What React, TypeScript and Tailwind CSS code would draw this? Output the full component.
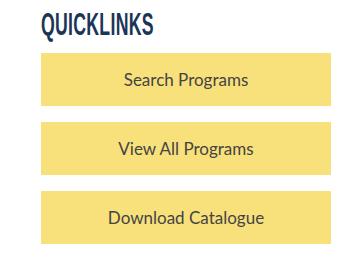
export default function App() {
  const links = ["Search Programs", "View All Programs", "Download Catalogue"];

  return (
    <div className="min-h-[271px] w-[363px] bg-white pl-[41px] pr-[32px] pt-[9px]">
      <h2 className="origin-left scale-x-[0.57] whitespace-nowrap font-['Liberation_Sans_Narrow','Liberation_Sans',sans-serif] text-[31px] font-bold leading-[32px] tracking-[0.5px] text-[#1b3556]">
        QUICKLINKS
      </h2>
      <div className="mt-[12px] flex flex-col gap-[16px]">
        {links.map((label) => (
          <a
            key={label}
            href="#"
            className="flex h-[53px] w-[290px] items-center justify-center bg-[#f8e07b] font-['Lato',sans-serif] text-[17px] text-[#444]"
          >
            {label}
          </a>
        ))}
      </div>
    </div>
  );
}
